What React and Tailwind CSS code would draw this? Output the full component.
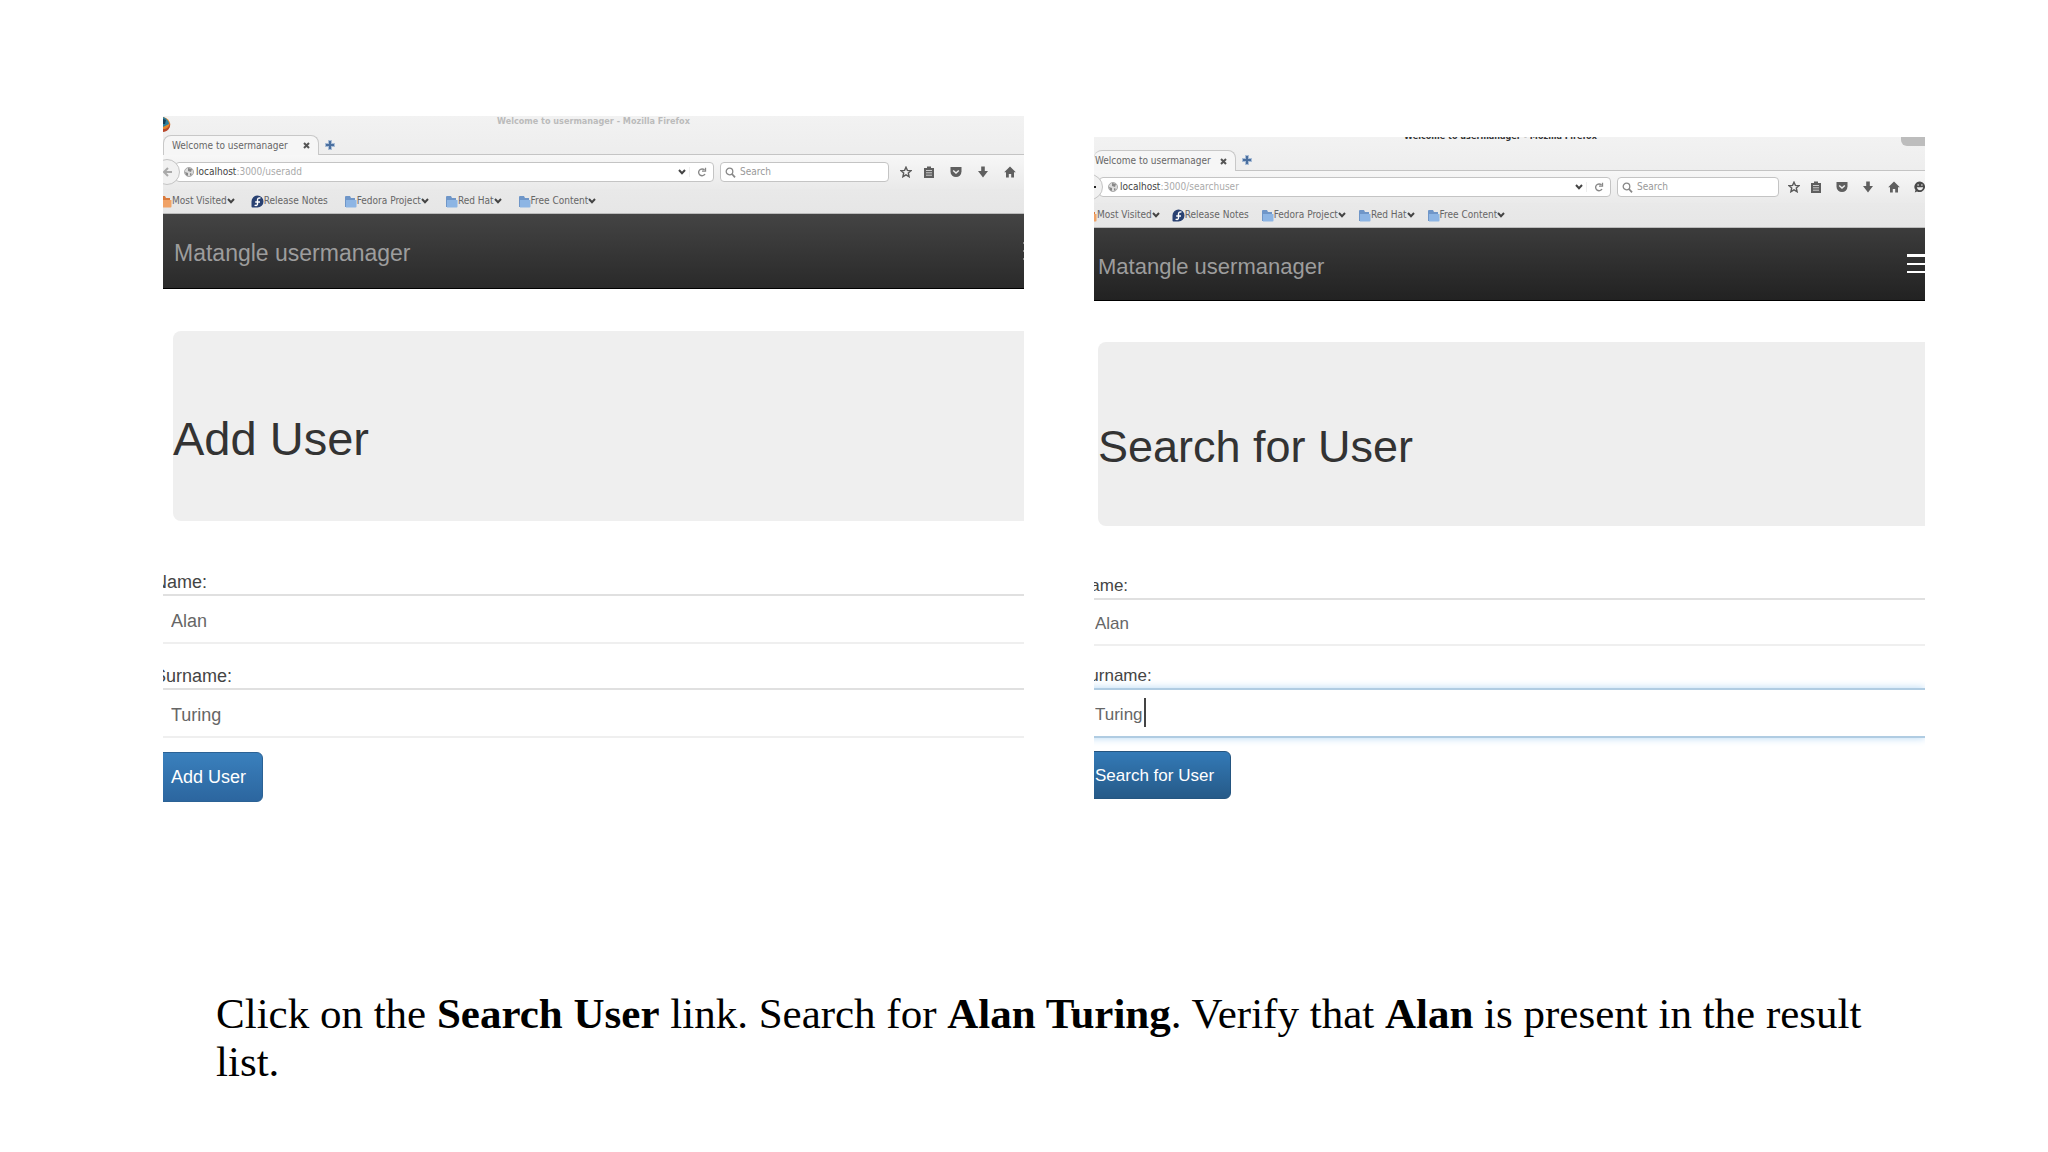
import { clsx } from 'clsx';

const FirefoxIcon = () => (
  <svg className="h-4 w-2" viewBox="0 0 8 16">
    <path d="M0 1C5 2 8 6 7 10C6 14 3 15 0 15Z" fill="#e8872c" />
    <path d="M0 1C3 2 6 5 6 8L0 11Z" fill="#2d7f9d" />
    <path d="M0 3L3 4L2 8L0 8Z" fill="#173c55" />
    <path d="M0 13C4 13 6 11 7 7C8 12 4 16 0 16Z" fill="#b8472b" />
  </svg>
);

const PlusIcon = () => (
  <svg className="h-[10px] w-[10px]" viewBox="0 0 10 10">
    <path d="M3 0h4v3h3v4h-3v3h-4v-3h-3v-4h3z" fill="#a9bdd6" />
    <path d="M4 1h2v3h3v2h-3v3h-2v-3h-3v-2h3z" fill="#4a6f9f" />
  </svg>
);

const CloseIcon = () => (
  <svg className="h-[7px] w-[7px]" viewBox="0 0 7 7">
    <path d="M1 1L6 6M6 1L1 6" stroke="#555" strokeWidth="2" />
  </svg>
);

const GlobeIcon = () => (
  <svg className="h-[10px] w-[10px] shrink-0" viewBox="0 0 10 10">
    <circle cx="5" cy="5" r="4.5" fill="#ddd" stroke="#aaa" strokeWidth="1" />
    <path d="M4 1L8 2L7 5L4 4ZM1 5L4 6L4 9L2 8ZM6 6L8 7L6 9Z" fill="#888" />
  </svg>
);

const ChevronIcon = () => (
  <svg className="h-[6px] w-2 shrink-0" viewBox="0 0 8 6">
    <path d="M1 1L4 4.2L7 1" fill="none" stroke="#444" strokeWidth="2" />
  </svg>
);

const ReloadIcon = () => (
  <svg className="h-[10px] w-[10px]" viewBox="0 0 10 10" fill="none" stroke="#888">
    <path d="M7.5 3A3.4 3.4 0 1 0 8 7" strokeWidth="1.4" />
    <path d="M5 4.2H8.5V0.8" strokeWidth="1.3" />
  </svg>
);

const SearchIcon = () => (
  <svg className="h-[11px] w-[11px] shrink-0" viewBox="0 0 11 11" fill="none" stroke="#888">
    <circle cx="4.5" cy="4.5" r="3.3" strokeWidth="1.3" />
    <path d="M7 7L10 10.3" strokeWidth="1.8" />
  </svg>
);

const FolderIcon = ({ orange }) => (
  <svg className="h-[13px] w-[13px] shrink-0" viewBox="0 0 13 13">
    <path d="M1 2Q1 1 2 1H6L7 3H11V12H1Z" fill={orange ? '#d97a3c' : '#6f96c8'} />
    <path d="M2 5H12.5V11.5Q12.5 12.5 11.5 12.5H2Z" fill={orange ? '#f0a266' : '#8db5e4'} />
  </svg>
);

const FedoraIcon = () => (
  <svg className="h-[13px] w-[13px] shrink-0" viewBox="0 0 13 13">
    <path d="M6.5 0.5A6 6 0 1 1 6.5 12.5H1.5Q0.5 12.5 0.5 11.5V6.5A6 6 0 0 1 6.5 0.5Z" fill="#294172" />
    <path d="M9.5 3.2C7.5 2.4 6.5 3.5 6.5 5V9C6.5 10.5 5 11 3.6 10M4.2 7H9" fill="none" stroke="#fff" strokeWidth="1.4" />
  </svg>
);

const StarIcon = () => (
  <svg className="h-3 w-3" viewBox="0 0 12 12">
    <path d="M6 1.2L7.4 4.4L11 4.7L8.3 7L9.1 10.7L6 8.8L2.9 10.7L3.7 7L1 4.7L4.6 4.4Z" fill="none" stroke="#5a5a5a" strokeWidth="1.4" />
  </svg>
);

const ClipboardIcon = () => (
  <svg className="h-3 w-3" viewBox="0 0 12 12">
    <path d="M4 2V0.5H8V2H11V12H1V2Z" fill="#5f5f5f" />
    <path d="M3 4.5H9M3 6.8H9M3 9.2H9" stroke="#ccc" strokeWidth="1" />
  </svg>
);

const PocketIcon = () => (
  <svg className="h-3 w-3" viewBox="0 0 12 12">
    <path d="M0.5 1H11.5V5.5A5.5 5.5 0 0 1 0.5 5.5Z" fill="#5f5f5f" />
    <path d="M3.2 4.5L6 7L8.8 4.5" fill="none" stroke="#eee" strokeWidth="1.5" />
  </svg>
);

const DownloadIcon = () => (
  <svg className="h-3 w-3" viewBox="0 0 12 12">
    <path d="M4.2 0.5H7.8V5H11L6 11.5L1 5H4.2Z" fill="#5f5f5f" />
  </svg>
);

const HomeIcon = () => (
  <svg className="h-3 w-3" viewBox="0 0 12 12">
    <path d="M6 0.5L11.8 6.2H10V11.5H7.2V8H4.8V11.5H2V6.2H0.2Z" fill="#5f5f5f" />
  </svg>
);

const SmileyIcon = () => (
  <svg className="h-3 w-3" viewBox="0 0 12 12">
    <path d="M6 0.5A5.5 5.3 0 1 1 3 10.5L0.8 11.5L1.5 9A5.5 5.3 0 0 1 6 0.5Z" fill="#4a4a4a" />
    <path d="M2.8 6.2H9.2Q8.5 9.2 6 9.2T2.8 6.2Z" fill="#eee" />
    <path d="M3.3 4H5M7 4H8.7" stroke="#eee" />
  </svg>
);

const toolbarIcons = [
  { label: 'Bookmark', Icon: StarIcon },
  { label: 'Show bookmarks', Icon: ClipboardIcon },
  { label: 'Pocket', Icon: PocketIcon },
  { label: 'Downloads', Icon: DownloadIcon },
  { label: 'Home', Icon: HomeIcon },
  { label: 'Hello', Icon: SmileyIcon },
];

const bookmarks = ['Fedora Project', 'Red Hat', 'Free Content'];

const BrowserChrome = ({ path, search }) => (
  <div className="bg-gradient-to-b from-[#f2f2f2] to-[#e6e6e6] font-['DejaVu_Sans_Condensed','DejaVu_Sans',sans-serif] text-[10px] leading-3 text-[#666]">
    {/* Title bar */}
    <div className={clsx('flex items-start justify-between', search ? 'h-[13px]' : 'h-[19px]')}>
      <div className="w-8">{!search && <FirefoxIcon />}</div>
      <p className={clsx('text-[9px] font-bold', search ? '-mt-[7px] pr-[18px] text-[#333]' : '-mt-px text-[#bbb]')}>
        Welcome to usermanager - Mozilla Firefox
      </p>
      <div className="flex w-8 justify-end">
        {search && <span className="h-[9px] w-6 rounded-bl-md bg-[#bdbdbd]"></span>}
      </div>
    </div>

    {/* Tabs */}
    <div className={clsx('flex items-stretch border-b border-[#c4c4c4]', search ? 'h-[21px]' : 'h-5')}>
      <div className={clsx(
        '-mb-px flex items-center justify-between rounded-t-lg border-t border-r border-[#c8c8c8] bg-[#f6f6f6]',
        search ? 'w-[142px] pl-px pr-2' : 'w-[156px] border-l pl-2 pr-2'
      )}>
        <span>Welcome to usermanager</span>
        <button aria-label="Close tab"><CloseIcon /></button>
      </div>
      <button className="ml-[6px]" aria-label="New tab"><PlusIcon /></button>
    </div>

    {/* Address bar */}
    <div className={clsx('flex items-center bg-gradient-to-b from-[#f7f7f7] to-[#eaeaea]', search ? 'h-8' : 'h-[34px]')}>
      <button
        className={clsx('z-10 flex h-[26px] w-[26px] shrink-0 items-center justify-end rounded-full border border-[#c4c4c4] bg-[#f1f1f1]', search ? '-ml-[17px] -mr-1 pr-[5px] text-[#222]' : '-ml-[9px] -mr-[5px] pr-[6px] text-[#aaa]')}
        aria-label="Back"
      >
        <svg className="h-[10px] w-[10px]" viewBox="0 0 10 10">
          <path d="M9 5H2M5 1L1 5L5 9" fill="none" stroke="currentColor" strokeWidth="2" />
        </svg>
      </button>
      <div className="flex h-5 min-w-0 flex-1 items-center rounded-sm border border-[#c4c4c4] bg-white pl-2">
        <GlobeIcon />
        <p className="ml-[2px] flex-1"><span className="text-[#444]">localhost</span><span className="text-[#aaa]">:3000/{path}</span></p>
        <ChevronIcon />
        <button className="ml-[3px] flex w-6 justify-center border-l border-[#eee]" aria-label="Reload"><ReloadIcon /></button>
      </div>
      <label className={clsx('ml-[6px] flex h-5 items-center gap-1 rounded-sm border border-[#c4c4c4] bg-white pl-1', search ? 'w-[162px]' : 'w-[169px]')}>
        <SearchIcon />
        <input className="w-full min-w-0 bg-transparent outline-none placeholder:text-[#999]" placeholder="Search" aria-label="Search the web" />
      </label>
      <div className={clsx('flex shrink-0 items-center overflow-hidden', search ? 'ml-[9px] w-[137px] gap-[14px]' : 'ml-[11px] w-[124px] gap-[15px]')}>
        {toolbarIcons.slice(0, search ? 6 : 5).map(({ label, Icon }, i) => (
          <button key={label} className={clsx('shrink-0', i === 1 && '-ml-1')} aria-label={label}><Icon /></button>
        ))}
      </div>
    </div>

    {/* Bookmarks bar */}
    <div className={clsx('flex h-[25px] items-center border-b border-[#bbb]', search ? 'gap-3' : 'gap-4')}>
      <button className={clsx('flex items-center whitespace-nowrap', search ? '-ml-[10px]' : '-ml-1')}><FolderIcon orange />Most Visited<ChevronIcon /></button>
      <button className="flex items-center whitespace-nowrap"><FedoraIcon />Release Notes</button>
      {bookmarks.map((name) => (
        <button key={name} className="flex items-center whitespace-nowrap"><FolderIcon />{name}<ChevronIcon /></button>
      ))}
    </div>
  </div>
);

const AddUserScreen = () => (
  <section className="min-w-0 overflow-hidden">
    <BrowserChrome path="useradd" />
    <nav className="flex h-[75px] items-center justify-between border-b border-black bg-gradient-to-b from-[#444] to-[#2a2a2a] pt-1 pl-[11px]">
      <a href="#home" className="text-[23px] text-[#9d9d9d]">Matangle usermanager</a>
      <span className="flex w-px flex-col gap-[6px] pb-1">
        <span className="h-[2px] bg-[#888]"></span>
        <span className="h-[2px] bg-[#888]"></span>
        <span className="h-[2px] bg-[#888]"></span>
      </span>
    </nav>
    <div className="mt-[42px] ml-[10px] flex h-[190px] items-center rounded-l-lg bg-[#efefef] pt-[26px]">
      <h1 className="text-[47px] text-[#333]">Add User</h1>
    </div>
    <form className="-ml-[9px] pt-[49px] text-lg text-[#444]" onSubmit={(e) => e.preventDefault()}>
      <label htmlFor="add-name" className="block h-6 leading-6">Name:</label>
      <input id="add-name" defaultValue="Alan" className="block h-[50px] w-full border-y-2 border-t-[#e0e0e0] border-b-[#efefef] px-[17px] pt-1 text-[#666] outline-none" />
      <label htmlFor="add-surname" className="mt-5 block h-6 leading-6">Surname:</label>
      <input id="add-surname" defaultValue="Turing" className="block h-[50px] w-full border-y-2 border-t-[#e0e0e0] border-b-[#efefef] px-[17px] pt-1 text-[#666] outline-none" />
      <button className="mt-[14px] h-[50px] rounded-md border border-[#2b6295] bg-gradient-to-b from-[#3a80bd] to-[#2c669f] px-4 text-white">Add User</button>
    </form>
  </section>
);

const SearchUserScreen = () => (
  <section className="mt-[21px] min-w-0 overflow-hidden">
    <BrowserChrome path="searchuser" search />
    <nav className="flex h-[73px] items-center justify-between border-b border-black bg-gradient-to-b from-[#3c3c3c] to-[#222] pt-1 pl-1">
      <a href="#home" className="text-[22px] text-[#9d9d9d]">Matangle usermanager</a>
      <button className="flex w-[18px] flex-col gap-[6px] pb-[6px]" aria-label="Toggle navigation">
        <span className="h-[3px] w-full bg-white"></span>
        <span className="h-[2px] w-full bg-white"></span>
        <span className="h-[2px] w-full bg-white"></span>
      </button>
    </nav>
    <div className="mt-[41px] ml-1 flex h-[184px] items-center rounded-l-lg bg-[#eee] pt-[26px]">
      <h1 className="text-[45px] text-[#333]">Search for User</h1>
    </div>
    <form className="-ml-4 pt-12 text-[17px] text-[#444]" onSubmit={(e) => e.preventDefault()}>
      <label htmlFor="search-name" className="block h-6 leading-6">Name:</label>
      <input id="search-name" defaultValue="Alan" className="block h-12 w-full border-y-2 border-t-[#e0e0e0] border-b-[#efefef] px-[17px] pt-1 text-[#666] outline-none" />
      <label htmlFor="search-surname" className="mt-[18px] block h-6 leading-6">Surname:</label>
      <div className="relative">
        <input id="search-surname" defaultValue="Turing" className="block h-[50px] w-full border-y-2 border-[#b0cce2] px-[17px] pt-1 text-[#666] shadow-[0_0_8px_#b5d8f5] outline-none" />
        <span className="absolute top-[10px] left-[66px] h-[29px] w-[2px] bg-[#444]"></span>
      </div>
      <button className="mt-[13px] h-12 rounded-md border border-[#245580] bg-gradient-to-b from-[#337ab7] to-[#265a88] px-4 pt-px text-white">Search for User</button>
    </form>
  </section>
);

const App = () => {
  return (
    <main className="min-h-screen bg-white pt-[116px] font-['Liberation_Sans',Arial,sans-serif]">
      <div className="grid grid-cols-[861fr_831fr] gap-[70px] pr-[123px] pl-[163px]">
        <AddUserScreen />
        <SearchUserScreen />
      </div>
      <p className="mt-[188px] pr-[150px] pl-[216px] font-['Palatino_Linotype',Palatino,'Liberation_Serif',serif] text-[43px] leading-[48px] text-black">
        Click on the <b>Search User</b> link. Search for <b>Alan Turing</b>. Verify that <b>Alan</b> is present in the result list.
      </p>
    </main>
  );
};

export default App;
